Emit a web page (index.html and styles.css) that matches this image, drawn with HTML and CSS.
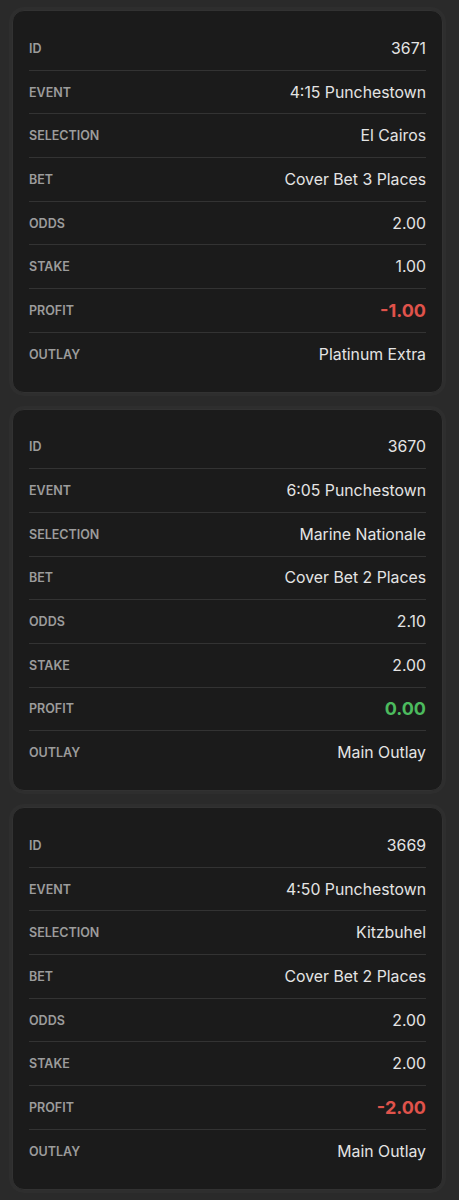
FILE: index.html
```html
<!DOCTYPE html>
<html lang="en">
<head>
    <meta charset="UTF-8">
    <meta name="viewport" content="width=device-width, initial-scale=1.0">
    <title>Bets</title>
    <link rel="stylesheet" href="styles.css">
</head>
<body>

<div class="bet-list">
    <div class="bet-card">
        <div class="bet-row"><span class="bet-label">ID</span><span class="bet-value">3671</span></div>
        <div class="bet-row"><span class="bet-label">Event</span><span class="bet-value">4:15 Punchestown</span></div>
        <div class="bet-row"><span class="bet-label">Selection</span><span class="bet-value">El Cairos</span></div>
        <div class="bet-row"><span class="bet-label">Bet</span><span class="bet-value">Cover Bet 3 Places</span></div>
        <div class="bet-row"><span class="bet-label">Odds</span><span class="bet-value">2.00</span></div>
        <div class="bet-row"><span class="bet-label">Stake</span><span class="bet-value">1.00</span></div>
        <div class="bet-row"><span class="bet-label">Profit</span><span class="bet-value profit loss">-1.00</span></div>
        <div class="bet-row"><span class="bet-label">Outlay</span><span class="bet-value">Platinum Extra</span></div>
    </div>

    <div class="bet-card">
        <div class="bet-row"><span class="bet-label">ID</span><span class="bet-value">3670</span></div>
        <div class="bet-row"><span class="bet-label">Event</span><span class="bet-value">6:05 Punchestown</span></div>
        <div class="bet-row"><span class="bet-label">Selection</span><span class="bet-value">Marine Nationale</span></div>
        <div class="bet-row"><span class="bet-label">Bet</span><span class="bet-value">Cover Bet 2 Places</span></div>
        <div class="bet-row"><span class="bet-label">Odds</span><span class="bet-value">2.10</span></div>
        <div class="bet-row"><span class="bet-label">Stake</span><span class="bet-value">2.00</span></div>
        <div class="bet-row"><span class="bet-label">Profit</span><span class="bet-value profit win">0.00</span></div>
        <div class="bet-row"><span class="bet-label">Outlay</span><span class="bet-value">Main Outlay</span></div>
    </div>

    <div class="bet-card">
        <div class="bet-row"><span class="bet-label">ID</span><span class="bet-value">3669</span></div>
        <div class="bet-row"><span class="bet-label">Event</span><span class="bet-value">4:50 Punchestown</span></div>
        <div class="bet-row"><span class="bet-label">Selection</span><span class="bet-value">Kitzbuhel</span></div>
        <div class="bet-row"><span class="bet-label">Bet</span><span class="bet-value">Cover Bet 2 Places</span></div>
        <div class="bet-row"><span class="bet-label">Odds</span><span class="bet-value">2.00</span></div>
        <div class="bet-row"><span class="bet-label">Stake</span><span class="bet-value">2.00</span></div>
        <div class="bet-row"><span class="bet-label">Profit</span><span class="bet-value profit loss">-2.00</span></div>
        <div class="bet-row"><span class="bet-label">Outlay</span><span class="bet-value">Main Outlay</span></div>
    </div>
</div>

</body>
</html>
```

FILE: styles.css
```css
body {
    margin: 0;
    background-color: #2a2a2a;
    font-family: 'Inter', 'Liberation Sans', sans-serif;
}
.bet-list {
    display: flex;
    flex-direction: column;
    gap: 16px;
    padding: 10px 16px 10px 12px;
}
.bet-card {
    background-color: #1b1b1b;
    border: 1px solid #323232;
    border-radius: 12px;
    padding: 16px;
    box-shadow: 0 0 0 3px rgba(255, 255, 255, 0.02);
}
.bet-row {
    display: flex;
    justify-content: space-between;
    align-items: center;
    height: 42.7px;
    border-bottom: 1px solid #333;
}
.bet-row:last-child {
    border-bottom: none;
}
.bet-label {
    font-size: 12.5px;
    font-weight: 600;
    color: #9c9c9c;
    text-transform: uppercase;
}
.bet-value {
    font-size: 15.8px;
    color: #e4e4e4;
}
.profit {
    font-size: 18px;
    font-weight: 700;
}
.loss {
    color: #e0534b;
}
.win {
    color: #4cbb5e;
}
```
